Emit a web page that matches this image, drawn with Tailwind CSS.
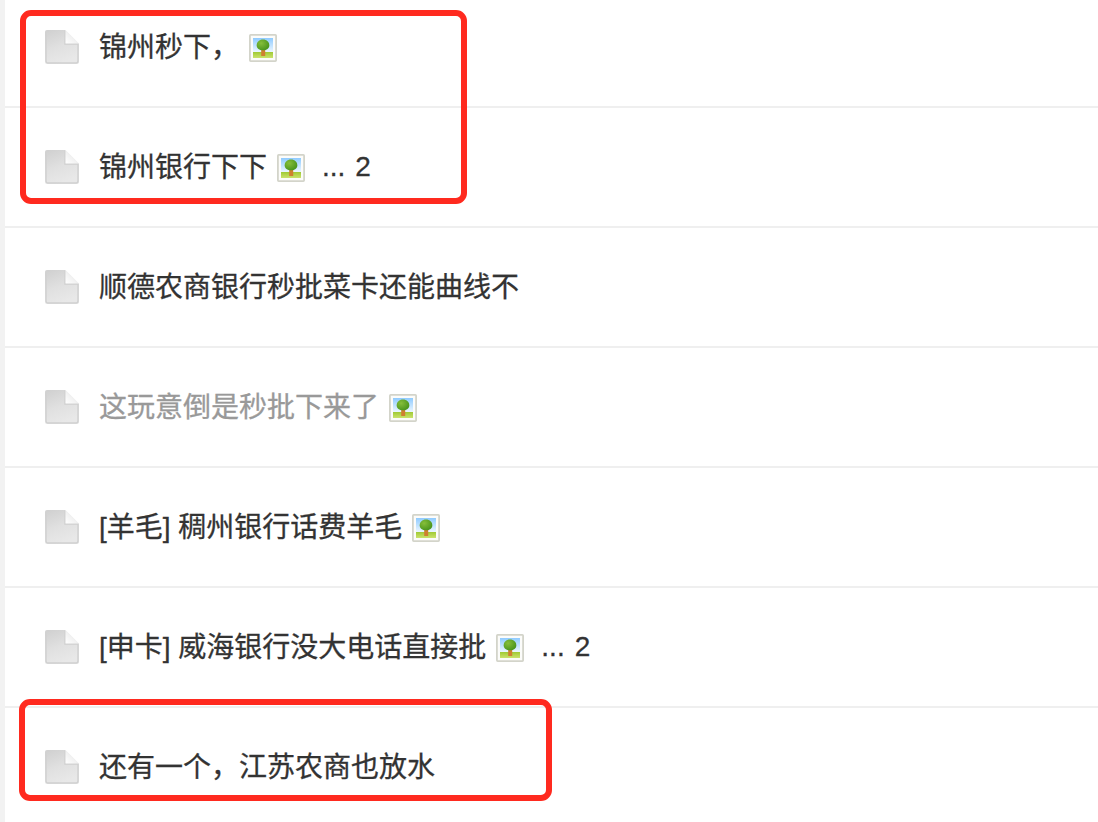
<!DOCTYPE html>
<html lang="zh-CN">
<head>
    <meta charset="UTF-8">
    <meta name="viewport" content="width=device-width, initial-scale=1.0">
    <title>帖子列表</title>
    <script src="https://cdn.jsdelivr.net/npm/@tailwindcss/browser@4"></script>
</head>
<body class="bg-white">
    <!-- 图标定义 -->
    <svg class="absolute size-0">
        <defs>
            <linearGradient id="paper" x1="0" y1="0" x2="0.4" y2="1">
                <stop offset="0" stop-color="#cfcfcf"/>
                <stop offset="0.55" stop-color="#e0e0e0"/>
                <stop offset="1" stop-color="#e8e8e8"/>
            </linearGradient>
            <linearGradient id="fold" x1="0" y1="1" x2="1" y2="0">
                <stop offset="0" stop-color="#ffffff"/>
                <stop offset="0.5" stop-color="#f0f0f0"/>
            </linearGradient>
            <linearGradient id="sky" x1="0" y1="0" x2="0" y2="1">
                <stop offset="0" stop-color="#8fcbff"/>
                <stop offset="1" stop-color="#f2faff"/>
            </linearGradient>
            <linearGradient id="grass" x1="0" y1="0" x2="0" y2="1">
                <stop offset="0" stop-color="#9fca34"/>
                <stop offset="1" stop-color="#cbe26c"/>
            </linearGradient>
            <radialGradient id="leaf" cx="0.35" cy="0.35" r="0.75">
                <stop offset="0" stop-color="#86be3a"/>
                <stop offset="1" stop-color="#45921a"/>
            </radialGradient>
        </defs>
        <symbol id="doc" viewBox="0 0 34 34">
            <path d="M2 0H20L34 14V32a2 2 0 0 1-2 2H2a2 2 0 0 1-2-2V2a2 2 0 0 1 2-2z" fill="url(#paper)"/>
            <path d="M20 0.5V14H33V31a2 2 0 0 1-2 2H3a2 2 0 0 1-2-2V3" fill="none" stroke="#d0d0d0" stroke-width="1.4"/>
            <path d="M20.5 0L34 13.5H20.5z" fill="url(#fold)"/>
        </symbol>
        <symbol id="pic" viewBox="0 0 28 28">
            <rect x="0.9" y="0.9" width="26.2" height="26.2" rx="0.8" fill="#fcfcfa" stroke="#d3d4ca" stroke-width="1.8"/>
            <rect x="4" y="4" width="20" height="15" fill="url(#sky)"/>
            <rect x="4" y="18" width="20" height="6" fill="url(#grass)"/>
            <path d="M12.2 15h4v7h-4z" fill="#cf7f30"/>
            <path d="M14 5.500c3.800 0 6.300 2.500 6.300 5.700s-2.600 5-6.300 5-6.300-1.800-6.300-5S10.200 5.500 14 5.500z" fill="url(#leaf)"/>
        </symbol>
    </svg>

    <div class="relative h-[822px] overflow-hidden border-l-[5px] border-[#f2f2f2] font-['Liberation_Sans','Noto_Sans_CJK_SC',sans-serif] text-[28px] leading-10 text-[#333] [-webkit-text-stroke:0.3px]">
        <ul class="-mt-3">
            <li class="flex h-[120px] items-center border-b-2 border-[#efefef] pl-10">
                <svg class="mr-5 size-[34px]"><use href="#doc"/></svg>
                <span class="pt-0.5">锦州秒下，</span>
                <svg class="mt-0.5 ml-[10px] size-7"><use href="#pic"/></svg>
            </li>
            <li class="flex h-[120px] items-center border-b-2 border-[#efefef] pl-10">
                <svg class="mr-5 size-[34px]"><use href="#doc"/></svg>
                <span class="pt-0.5">锦州银行下下</span>
                <svg class="mt-0.5 ml-[10px] size-7"><use href="#pic"/></svg>
                <span class="ml-[17px]">...</span>
                <span class="ml-[10px]">2</span>
            </li>
            <li class="flex h-[120px] items-center border-b-2 border-[#efefef] pl-10">
                <svg class="mr-5 size-[34px]"><use href="#doc"/></svg>
                <span class="pt-0.5">顺德农商银行秒批菜卡还能曲线不</span>
            </li>
            <li class="flex h-[120px] items-center border-b-2 border-[#efefef] pl-10">
                <svg class="mr-5 size-[34px]"><use href="#doc"/></svg>
                <span class="pt-0.5 text-[#999]">这玩意倒是秒批下来了</span>
                <svg class="mt-0.5 ml-[10px] size-7"><use href="#pic"/></svg>
            </li>
            <li class="flex h-[120px] items-center border-b-2 border-[#efefef] pl-10">
                <svg class="mr-5 size-[34px]"><use href="#doc"/></svg>
                <span class="pt-0.5">[羊毛] 稠州银行话费羊毛</span>
                <svg class="mt-0.5 ml-[10px] size-7"><use href="#pic"/></svg>
            </li>
            <li class="flex h-[120px] items-center border-b-2 border-[#efefef] pl-10">
                <svg class="mr-5 size-[34px]"><use href="#doc"/></svg>
                <span class="pt-0.5">[申卡] 威海银行没大电话直接批</span>
                <svg class="mt-0.5 ml-[10px] size-7"><use href="#pic"/></svg>
                <span class="ml-[17px]">...</span>
                <span class="ml-[10px]">2</span>
            </li>
            <li class="flex h-[120px] items-center border-b-2 border-[#efefef] pl-10">
                <svg class="mr-5 size-[34px]"><use href="#doc"/></svg>
                <span class="pt-0.5">还有一个，江苏农商也放水</span>
            </li>
        </ul>

        <!-- 红框标注 -->
        <div class="absolute top-[10px] left-[15px] h-[194px] w-[447px] rounded-[11px] border-6 border-[#ff2a1f]"></div>
        <div class="absolute top-[699px] left-[14px] h-[102px] w-[533px] rounded-[11px] border-6 border-[#ff2a1f]"></div>
    </div>
</body>
</html>
